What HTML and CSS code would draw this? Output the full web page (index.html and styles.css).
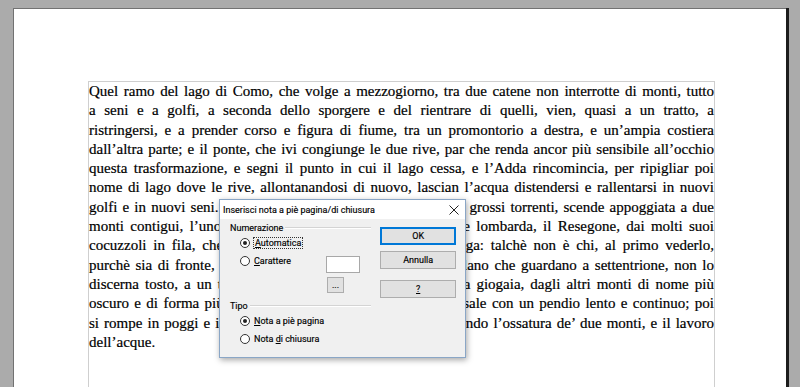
FILE: index.html
```html
<!DOCTYPE html>
<html lang="it">
<head>
    <meta charset="UTF-8">
    <meta name="viewport" content="width=device-width, initial-scale=1.0">
    <link rel="stylesheet" href="styles.css">
    <title>Inserisci nota a piè pagina/di chiusura</title>
</head>
<body>
    <div class="desk">
        <div class="page">
            <div class="text-area">
                <p class="body-text">
                    <span class="ln">Quel ramo del lago di Como, che volge a mezzogiorno, tra due catene non interrotte di monti, tutto</span>
                    <span class="ln">a seni e a golfi, a seconda dello sporgere e del rientrare di quelli, vien, quasi a un tratto, a</span>
                    <span class="ln">ristringersi, e a prender corso e figura di fiume, tra un promontorio a destra, e un’ampia costiera</span>
                    <span class="ln">dall’altra parte; e il ponte, che ivi congiunge le due rive, par che renda ancor più sensibile all’occhio</span>
                    <span class="ln">questa trasformazione, e segni il punto in cui il lago cessa, e l’Adda rincomincia, per ripigliar poi</span>
                    <span class="ln">nome di lago dove le rive, allontanandosi di nuovo, lascian l’acqua distendersi e rallentarsi in nuovi</span>
                    <span class="ln">golfi e in nuovi seni. La costiera, formata dal deposito di tre grossi torrenti, scende appoggiata a due</span>
                    <span class="ln">monti contigui, l’uno detto di san Martino, l’altro, con voce lombarda, il Resegone, dai molti suoi</span>
                    <span class="ln">cocuzzoli in fila, che in vero lo fanno somigliare a una sega: talchè non è chi, al primo vederlo,</span>
                    <span class="ln">purchè sia di fronte, come per esempio di su le mura di Milano che guardano a settentrione, non lo</span>
                    <span class="ln">discerna tosto, a un tal contrassegno, in quella lunga e vasta giogaia, dagli altri monti di nome più</span>
                    <span class="ln">oscuro e di forma più comune. Per un buon pezzo, la costa sale con un pendio lento e continuo; poi</span>
                    <span class="ln">si rompe in poggi e in valloncelli, in erte e in ispianate, secondo l’ossatura de’ due monti, e il lavoro</span>
                    <span class="ln last">dell’acque.</span>
                </p>
            </div>
        </div>

        <div class="dialog">
            <div class="dlg-title">
                <span>Inserisci nota a piè pagina/di chiusura</span>
                <svg class="close" width="10" height="10" viewBox="0 0 10 10">
                    <path d="M0.5 0.5 L9.5 9.5 M9.5 0.5 L0.5 9.5" stroke="#222" stroke-width="1" fill="none"/>
                </svg>
            </div>
            <div class="dlg-body">
                <div class="groups">
                    <div class="legend"><span>Numerazione</span></div>
                    <div class="opt">
                        <span class="radio checked"></span>
                        <span class="focus"><u>A</u>utomatica</span>
                    </div>
                    <div class="opt">
                        <span class="radio"></span>
                        <span><u>C</u>arattere</span>
                        <span class="char-box"></span>
                    </div>
                    <div class="dots-row">
                        <span class="dots-btn">...</span>
                    </div>
                    <div class="legend tipo"><span>Tipo</span></div>
                    <div class="opt">
                        <span class="radio checked"></span>
                        <span><u>N</u>ota a piè pagina</span>
                    </div>
                    <div class="opt">
                        <span class="radio"></span>
                        <span>Nota <u>d</u>i chiusura</span>
                    </div>
                </div>
                <div class="buttons">
                    <button type="button" class="btn default">OK</button>
                    <button type="button" class="btn">Annulla</button>
                    <button type="button" class="btn help"><u>?</u></button>
                </div>
            </div>
        </div>
    </div>
</body>
</html>
```

FILE: styles.css
```css
/* word page behind */
body {
    margin: 0;
    padding: 0;
}

.desk {
    position: relative;
    width: 800px;
    height: 387px;
    overflow: hidden;
    background-color: #ababab;
    padding: 8px 0 0 13px;
    box-sizing: border-box;
}

.page {
    width: 773px;
    height: 420px;
    background: #ffffff;
    border-top: 1px solid #727272;
    border-left: 1px solid #727272;
    box-shadow: 3px 0 0 #1c1c1c;
    box-sizing: border-box;
    padding: 72px 0 0 74px;
}

.text-area {
    width: 627px;
    height: 400px;
    border: 1px solid #cfcfcf;
    border-bottom: none;
    box-sizing: border-box;
}

.body-text {
    margin: 0;
    font-family: "Liberation Serif", "Times New Roman", serif;
    font-size: 15px;
    line-height: 19.3px;
    color: #000;
    -webkit-text-stroke: 0.2px #000;
}

.ln {
    display: block;
    text-align: justify;
    text-align-last: justify;
}

.ln.last {
    text-align-last: left;
}

/* dialog */
.dialog {
    position: absolute;
    left: 219px;
    top: 199px;
    width: 247px;
    height: 159px;
    box-sizing: border-box;
    border: 1px solid #8aa6c6;
    background: #f0f0f0;
    box-shadow: 1px 2px 6px rgba(0, 0, 0, 0.35);
    font-family: Roboto, "Noto Sans", sans-serif;
    font-size: 9px;
    color: #000;
    -webkit-text-stroke: 0.15px #000;
}

.dlg-title {
    height: 19px;
    background: #ffffff;
    display: flex;
    align-items: center;
    justify-content: space-between;
    padding: 0 6px 0 3px;
}

.dlg-body {
    display: flex;
    gap: 9px;
    padding: 3px 9px 0 9px;
}

.groups {
    width: 143px;
}

.legend {
    display: flex;
    align-items: center;
    height: 12px;
    gap: 2px;
    padding-left: 1px;
}

.legend::after {
    content: "";
    flex: 1;
    border-top: 1px solid #d4d4d4;
    border-bottom: 1px solid #ffffff;
}

.legend.tipo {
    margin-top: 7px;
}

.opt {
    display: flex;
    align-items: center;
    height: 18px;
    padding-left: 11px;
    gap: 4px;
}

.radio {
    width: 10px;
    height: 10px;
    border: 1px solid #333;
    border-radius: 50%;
    background: #fff;
    box-sizing: border-box;
    position: relative;
    flex: none;
}

.radio.checked::after {
    content: "";
    position: absolute;
    left: 2px;
    top: 2px;
    width: 4px;
    height: 4px;
    border-radius: 50%;
    background: #222;
}

.focus {
    outline: 1px dotted #333;
    outline-offset: 0;
    padding: 0 1px;
}

.char-box {
    margin-left: auto;
    margin-right: 11px;
    align-self: flex-start;
    margin-top: 4px;
    width: 34px;
    height: 17px;
    background: #fff;
    border: 1px solid #a8a8a8;
    box-sizing: border-box;
}

.dots-row {
    margin-top: 7px;
    padding-left: 98px;
    height: 16px;
}

.dots-btn {
    display: flex;
    align-items: center;
    justify-content: center;
    width: 17px;
    height: 16px;
    box-sizing: border-box;
    background: #e1e1e1;
    border: 1px solid #adadad;
    font-size: 9px;
    line-height: 1;
}

.buttons {
    width: 76px;
    margin-top: 5px;
    display: flex;
    flex-direction: column;
}

.btn {
    height: 18px;
    padding: 0;
    background: #e1e1e1;
    border: 1px solid #adadad;
    font-family: Roboto, "Noto Sans", sans-serif;
    font-size: 9px;
    color: #000;
    -webkit-text-stroke: 0.15px #000;
}

.btn.default {
    border: 1px solid #0078d7;
    box-shadow: inset 0 0 0 1px #0078d7;
}

.btn + .btn {
    margin-top: 6px;
}

.btn.help {
    margin-top: 11px;
}
```
